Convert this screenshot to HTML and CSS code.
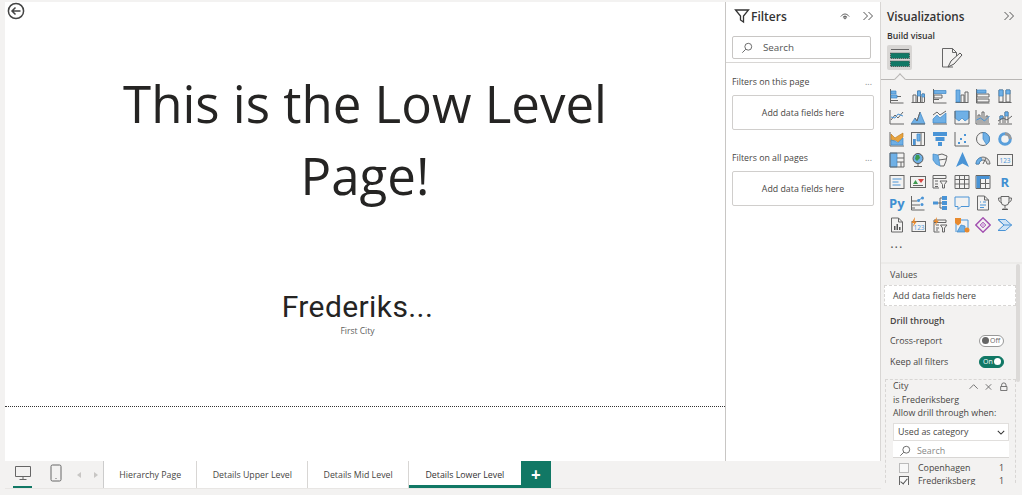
FILE: index.html
```html
<!DOCTYPE html>
<html lang="en">
<head>
    <meta charset="UTF-8">
    <title>Details Lower Level</title>
    <link rel="stylesheet" href="styles.css">
</head>
<body>
<div class="app">
    <div class="report">
        <div class="report-top">
            <div class="canvas">
                <svg class="back" viewBox="0 0 18 18"><circle cx="9" cy="9" r="7.6"/><path d="M13.5 9H5M8.500 5.500 5 9l3.500 3.500"/></svg>
                <div class="headline">This is the Low Level Page!</div>
                <div class="card">
                    <div class="card-value">Frederiks...</div>
                    <div class="card-label">First City</div>
                </div>
            </div>

            <div class="filters">
                <div class="pane-head">
                    <svg class="funnel" viewBox="0 0 16 16"><path d="M1.500 2h13L9.500 8v6l-3-2V8z"/></svg>
                    <span class="pane-title">Filters</span>
                    <svg class="eye" viewBox="0 0 12 10"><path d="M1 5c3-4 7-4 10 0M3.500 6c1.500-2 3.500-2 5 0"/><circle cx="6" cy="6.500" r="1.300"/></svg>
                    <svg class="chev" viewBox="0 0 12 10"><path d="M1.500 1l4 4-4 4M6.500 1l4 4-4 4"/></svg>
                </div>
                <div class="search">
                    <svg class="glass" viewBox="0 0 14 14"><circle cx="8.500" cy="5.500" r="4"/><path d="M5.500 8.500 1.500 12.500"/></svg>
                    <span>Search</span>
                </div>
                <div class="filter-group">
                    <div class="group-head"><span>Filters on this page</span><span class="more">...</span></div>
                    <div class="drop">Add data fields here</div>
                </div>
                <div class="filter-group">
                    <div class="group-head"><span>Filters on all pages</span><span class="more">...</span></div>
                    <div class="drop">Add data fields here</div>
                </div>
            </div>
        </div>

        <div class="tabbar">
            <div class="views">
                <span class="view view-on"><svg viewBox="0 0 18 18"><path d="M1.500 2.500h15v10h-15zM9 12.500v3M5.500 15.500h7"/></svg></span>
                <span class="view"><svg viewBox="0 0 18 18"><rect x="4" y="1" width="10" height="16" rx="1.500"/><path d="M8.500 14.500h1"/></svg></span>
                <span class="pager"><i class="left"></i><i class="right"></i></span>
            </div>
            <div class="tab">Hierarchy Page</div>
            <div class="tab">Details Upper Level</div>
            <div class="tab">Details Mid Level</div>
            <div class="tab tab-on">Details Lower Level</div>
            <div class="tab-add">+</div>
        </div>
    </div>

    <div class="viz">
        <div class="viz-top">
            <div class="pane-head">
                <span class="pane-title">Visualizations</span>
                <svg class="chev" viewBox="0 0 12 10"><path d="M1.500 1l4 4-4 4M6.500 1l4 4-4 4"/></svg>
            </div>
            <div class="build">Build visual</div>
            <div class="modes">
                <span class="mode mode-on">
                    <svg viewBox="0 0 22 22"><path class="g" d="M2 2.500h18"/><rect x="1.500" y="6" width="19" height="5.500" fill="#117865" stroke="#555" stroke-dasharray="1 1"/><rect x="1.500" y="14" width="19" height="5.500" fill="#117865" stroke="#555" stroke-dasharray="1 1"/></svg>
                </span>
                <span class="mode">
                    <svg viewBox="0 0 22 22"><path class="g" d="M12 20H1.500V1.500h10l4 4V9"/><path class="g" d="M11.500 1.500v4h4"/><path d="M7 20l3-6 9-8 2 2-8 9z" fill="#f3f2f1" stroke="#555"/></svg>
                </span>
            </div>
            <div class="mode-rule"><i></i></div>
            <div class="vgrid">
                <!-- row 1 -->
                <svg class="vi" viewBox="0 0 16 16"><path class="g" d="M1.500 1v14h13M2 4.500h5M2 8.500h10M2 12.500h7"/><path class="b" d="M2 3h5v3H2zM2 7h6v3H2z"/></svg>
                <svg class="vi" viewBox="0 0 16 16"><path class="g" d="M1.500 14.500h13M3 14V7h3v7M7.500 14V3h3v11M12 14V6h2.500v8"/><path class="b" d="M7.500 3h3v5h-3zM12 6h2.500v3H12z"/></svg>
                <svg class="vi" viewBox="0 0 16 16"><path class="g" d="M1.500 1v14h13M2 7h8v3H2zM2 11.500h5"/><path class="b" d="M2 2.500h12v3H2z"/></svg>
                <svg class="vi" viewBox="0 0 16 16"><path class="g" d="M1.500 14.500h13M7 14V7h3v7M11 14V4h3v10"/><path class="b" d="M2 2h4v12H2z"/></svg>
                <svg class="vi" viewBox="0 0 16 16"><path class="g" d="M1.500 1v14h13M2 6h12v3H2zM2 11h12v3H2z"/><path class="b" d="M2 2h9v3H2z"/></svg>
                <svg class="vi" viewBox="0 0 16 16"><path class="g" d="M1.500 14.500h13M2 2h4v12H2zM9 2h4v12H9z"/><path class="b" d="M2 2h4v6H2zM9 2h4v4H9z"/></svg>
                <!-- row 2 -->
                <svg class="vi" viewBox="0 0 16 16"><path class="g" d="M1 1v14h14"/><path class="g" d="M2 11l4-5 3 3 5-6"/><path class="l" d="M2 8l4 1 3-4 5 2"/></svg>
                <svg class="vi" viewBox="0 0 16 16"><path class="b" d="M1 15l4-6 2 3 3-9 5 12z"/><path class="g" d="M1 15h14M5 9l2 3 3-9"/></svg>
                <svg class="vi" viewBox="0 0 16 16"><path class="b" d="M1 10l4-4 3 3 6-5v10H1z"/><path class="g" d="M1 6l4-3 3 3 6-4M1 15h14"/></svg>
                <svg class="vi" viewBox="0 0 16 16"><path class="b" d="M1 2h14v7l-4 3-3-3-3 3-4-3z"/><path class="g" d="M1 15h14V2M1 2v13"/></svg>
                <svg class="vi" viewBox="0 0 16 16"><path class="g" d="M1 1v14h14M3 14V6h2v8M7 14V3h2v11M11 14V7h2v7"/><path class="l" d="M1.500 11l4-2 4 3 5-5"/></svg>
                <svg class="vi" viewBox="0 0 16 16"><path class="g" d="M1 15h14M3 14V7h3v7M8 14V3h3v11"/><path class="b" d="M3 7h3v3H3zM8 3h3v4H8z"/><path class="g" d="M1 12l5-3 4 2 5-4"/></svg>
                <!-- row 3 -->
                <svg class="vi" viewBox="0 0 16 16"><path class="g" d="M1 1v14h14"/><path d="M2 3l4 4 3-2 5-3v4l-5 5-3-2-4 2z" fill="#e8a33d" stroke="#b5761c" stroke-width=".6"/><path class="b" d="M2 9l4 1 3 2 5-5v7H2z"/></svg>
                <svg class="vi" viewBox="0 0 16 16"><path class="g" d="M1 1.500h14M1.500 2v12.500h13V2M5 14V8M11 14V2"/><path class="b" d="M7 3h3v7H7z"/><path class="f" d="M3 8h2.500v6H3z"/></svg>
                <svg class="vi" viewBox="0 0 16 16"><path class="f" d="M1 1h14v4H1zM3.500 6h9v4h-9zM6 11h4v4H6z"/></svg>
                <svg class="vi" viewBox="0 0 16 16"><path class="g" d="M1 1v14h14"/><path class="d" d="M4 11h2v2H4zM6 7h2v2H6zM10 10h2v2h-2zM10 3h2v2h-2z"/></svg>
                <svg class="vi" viewBox="0 0 16 16"><circle class="g2" cx="8" cy="8" r="6.500"/><path class="b" d="M8 1.500A6.500 6.500 0 0 1 14.500 8a6.500 6.500 0 0 1-3 5.500L8 8z"/></svg>
                <svg class="vi" viewBox="0 0 16 16"><circle cx="8" cy="8" r="5.300" fill="none" stroke="#5a9fdb" stroke-width="3"/><path d="M8 2.700A5.300 5.300 0 0 1 13.300 8" fill="none" stroke="#9a9a9a" stroke-width="3"/></svg>
                <!-- row 4 -->
                <svg class="vi" viewBox="0 0 16 16"><path class="b" d="M1 1h7v14H1z"/><path class="g" d="M1 1h14v14H1zM8 6h7M8 10h7M12 10v5"/></svg>
                <svg class="vi" viewBox="0 0 16 16"><circle cx="8" cy="6.500" r="5" fill="#6fb0e6" stroke="#555"/><path d="M6 3l3 0 1 3-3 3-2-2z" fill="#3c9a4e"/><path class="g" d="M4 14.500h8M8 11.500v3"/></svg>
                <svg class="vi" viewBox="0 0 16 16"><path class="b" d="M1 2l5 1 1 5 1 6-4-2-3-4z"/><path class="g" d="M6 3l4-1 5 2-1 5-2 5-4 0M7 8l7-1"/></svg>
                <svg class="vi" viewBox="0 0 16 16"><path d="M8.500 0 15 15l-6.500-3.500L2 15z" fill="#4a94d6"/></svg>
                <svg class="vi" viewBox="0 0 16 16"><path d="M1 12a7 7 0 0 1 14 0h-3a4 4 0 0 0-8 0z" fill="#d8d8d8" stroke="#555" stroke-width=".8"/><path class="b" d="M1 12a7 7 0 0 1 5-6.500L7 8.300A4 4 0 0 0 4 12z"/><path class="g" d="M8 12l3-6"/></svg>
                <svg class="vi" viewBox="0 0 16 16"><rect class="g2" x=".5" y="2.500" width="15" height="11"/><text class="vtext" x="8" y="10.500">123</text></svg>
                <!-- row 5 -->
                <svg class="vi" viewBox="0 0 16 16"><rect class="g2" x="1" y="1.500" width="14" height="13"/><path class="l" d="M3.500 5h9M3.500 8h6M3.500 11h8"/></svg>
                <svg class="vi" viewBox="0 0 16 16"><rect class="g2" x=".5" y="2.500" width="15" height="11"/><path d="M3 10l2.500-4L8 10z" fill="#3c9a4e"/><path d="M8 5h6l-3 4z" fill="#d64541"/><path class="g" d="M3 11.500h10"/></svg>
                <svg class="vi" viewBox="0 0 16 16"><path class="g" d="M1 1.500h13v3H1zM1 4.500V14h6M3 7h3M3 10h3M3 12.500h3M8 7h7l-2.500 3.500V14h-2v-3.500z"/></svg>
                <svg class="vi" viewBox="0 0 16 16"><path class="g" d="M1 1.500h14v13H1zM1 5.500h14M1 10h14M5.500 2v12M10.500 2v12"/></svg>
                <svg class="vi" viewBox="0 0 16 16"><path class="g" d="M1 1.500h14v13H1z"/><path d="M1.500 2h13v3h-13zM1.500 5h4v9h-4z" fill="#4a94d6"/><path class="g" d="M5.500 9.500h9M10.500 5v9M5.500 5v9"/></svg>
                <span class="vi lang">R</span>
                <!-- row 6 -->
                <span class="vi lang">Py</span>
                <svg class="vi" viewBox="0 0 16 16"><path class="g" d="M1.500 1v14h13M2 6h5M2 10h8M2 13h3"/><circle class="d" cx="8.500" cy="5.500" r="1.500"/><circle class="d" cx="12.500" cy="3" r="1.500"/><circle class="d" cx="12" cy="9.500" r="1.500"/><path class="l" d="M9 5l3-2"/></svg>
                <svg class="vi" viewBox="0 0 16 16"><path class="f" d="M1 6.500h5v3H1zM10 1h5v4h-5zM10 6h5v4h-5zM10 11h5v4h-5z"/><path class="g" d="M6 8h4M8 3v10M8 3h2M8 13h2"/></svg>
                <svg class="vi" viewBox="0 0 16 16"><path class="l" d="M1 2h14v9.500H7l-3 3v-3H1z"/></svg>
                <svg class="vi" viewBox="0 0 16 16"><path class="g" d="M2.500 15V1h7l4 4v10zM9.500 1v4h4"/><path class="l" d="M5 7h1M8 7h3M5 10h6M5 12.500h4"/></svg>
                <svg class="vi" viewBox="0 0 16 16"><path class="g" d="M4 1.500h8v5a4 4 0 0 1-8 0zM4 3H1.500c0 3 1 4 3 4.500M12 3h2.500c0 3-1 4-3 4.500M8 10.500V13M5 14.500h6"/><path d="M5.500 13.500h5v1.500h-5z" fill="#555"/></svg>
                <!-- row 7 -->
                <svg class="vi" viewBox="0 0 16 16"><path class="g" d="M2.500 15V1h7l4 4v10zM9.500 1v4h4"/><path d="M5 13V9h1.500v4zM7.500 13V7H9v6zM10 13v-3h1.500v3z" fill="#555"/></svg>
                <svg class="vi" viewBox="0 0 16 16"><rect class="g2" x="2" y="4.500" width="13.500" height="10"/><text class="vtext" x="9" y="12.500">123</text><path d="M5 0 1.500 6H4L2.500 10 7 4.500H4.500z" fill="#e88a2d"/></svg>
                <svg class="vi" viewBox="0 0 16 16"><path class="g" d="M2 3h12v2.500H2zM2 5.500V15h5.500M4 8h3M4 11h3M4 13h2M8.500 8H15l-2.500 3v4h-2v-4z"/><path d="M5 0 1.500 5H4L2.500 9 7 3.500H4.500z" fill="#e88a2d"/></svg>
                <svg class="vi" viewBox="0 0 16 16"><path class="l" d="M2 15V3h12v8"/><path d="M1 1h6v5L4 8.500 1 6z" fill="#e88a2d"/><path class="b" d="M3 15l4-7 4 1v6z"/><circle cx="13" cy="13" r="2.500" fill="#e88a2d"/></svg>
                <svg class="vi" viewBox="0 0 16 16"><path d="M8 .8 15.200 8 8 15.200.8 8z" fill="none" stroke="#a24fb0" stroke-width="1.400"/><path d="M8 5l3 3-3 3-3-3z" fill="#d8b4df" stroke="#a24fb0" stroke-width=".7"/></svg>
                <svg class="vi" viewBox="0 0 16 16"><path d="M1 2.500h7.500l6 5.500-6 5.500H1l6-5.500z" fill="#cfe4f6" stroke="#4a94d6"/><path d="M1 2.500 7 8h8" fill="none" stroke="#4a94d6"/></svg>
                <span class="vi vdots">...</span>
            </div>
        </div>
        <div class="viz-well">
            <div class="well-label">Values</div>
            <div class="well-drop">Add data fields here</div>
            <div class="well-head">Drill through</div>
            <div class="switch-row"><span>Cross-report</span><span class="switch"><i></i>Off</span></div>
            <div class="switch-row"><span>Keep all filters</span><span class="switch switch-on">On<i></i></span></div>
            <div class="field-card">
                <div class="card-head">
                    <span>City</span>
                    <svg viewBox="0 0 44 10"><path d="M1 7.500 5.500 3 10 7.500M19 2.500l6 6M25 2.500l-6 6M36.500 5V3.500a2.500 2.500 0 0 1 5 0V5M35.500 5h7v4.500h-7z"/></svg>
                </div>
                <div class="card-line card-first">is Frederiksberg</div>
                <div class="card-line card-second">Allow drill through when:</div>
                <div class="select"><span>Used as category</span><svg viewBox="0 0 10 6"><path d="M1 1l4 4 4-4"/></svg></div>
                <div class="list-search">
                    <svg class="glass" viewBox="0 0 14 14"><circle cx="8.500" cy="5.500" r="4"/><path d="M5.500 8.500 1.500 12.500"/></svg>
                    <span>Search</span>
                </div>
                <div class="option"><i class="check"></i><span>Copenhagen</span><b>1</b></div>
                <div class="option"><i class="check checked"></i><span>Frederiksberg</span><b>1</b></div>
            </div>
            <div class="scroll-thumb"></div>
        </div>
    </div>
</div>
</body>
</html>
```

FILE: styles.css
```css
* {
    box-sizing: border-box;
}
html, body {
    margin: 0;
    height: 100%;
    overflow: hidden;
}
body {
    font-family: "Open Sans", "Noto Sans", sans-serif;
    color: #333;
    background: #f3f2f1;
}
.app {
    display: flex;
    width: 1022px;
    height: 495px;
    padding-top: 2px;
}
.report {
    width: 876px;
    margin-left: 5px;
    flex: none;
    display: flex;
    flex-direction: column;
}
.report-top {
    display: flex;
    height: 459px;
}
.canvas {
    position: relative;
    width: 720px;
    flex: none;
    background: #fff;
    display: flex;
    flex-direction: column;
    align-items: center;
}
.canvas::after {
    content: "";
    position: absolute;
    left: 0;
    right: 0;
    top: 404px;
    border-top: 1px dotted #333;
}
.back {
    position: absolute;
    left: 2px;
    top: 0;
    width: 18px;
    height: 18px;
    fill: none;
    stroke: #444;
    stroke-width: 1.500;
}
.headline {
    width: 520px;
    margin-top: 65px;
    text-align: center;
    font-size: 51px;
    line-height: 72px;
    color: #252423;
}
.card {
    margin: 78px 15px 0 0;
    text-align: center;
}
.card-value {
    font-family: Roboto, sans-serif;
    font-size: 30px;
    line-height: 36px;
    letter-spacing: .4px;
    color: #252423;
}
.card-label {
    font-size: 8.500px;
    line-height: 12px;
    color: #605e5c;
}

/* page tabs */
.tabbar {
    display: flex;
    height: 28px;
    font-size: 8.800px;
    color: #484644;
    border-bottom: 1px solid #e8e6e4;
}
.views {
    width: 99px;
    display: flex;
    align-items: center;
    padding-left: 8px;
    border-right: 1px solid #ccc;
}
.view {
    width: 19px;
    height: 27px;
    margin-right: 16px;
    display: flex;
    align-items: center;
    justify-content: center;
    padding-bottom: 3px;
}
.view + .view {
    margin-left: -2px;
    margin-right: 14px;
}
.view svg {
    width: 18px;
    height: 18px;
    fill: none;
    stroke: #666;
}
.view-on {
    border-bottom: 2px solid #117865;
    height: 24px;
    margin-top: 2px;
}
.pager {
    display: flex;
    gap: 13px;
    margin-left: -2px;
}
.pager i {
    border: 3px solid transparent;
}
.pager .left {
    border-right: 4px solid #c8c6c4;
    border-left: 0;
}
.pager .right {
    border-left: 4px solid #c8c6c4;
    border-right: 0;
}
.tab {
    background: #fff;
    padding: 0 15.250px;
    display: flex;
    align-items: center;
    border-right: 1px solid #d8d6d4;
}
.tab-on {
    border-right: 0;
    border-bottom: 3px solid #117865;
    padding: 3px 16.500px 0;
    color: #333;
}
.tab-add {
    width: 30px;
    background: #117865;
    color: #fff;
    font-size: 17px;
    font-weight: 700;
    display: flex;
    align-items: center;
    justify-content: center;
}

/* filter pane */
.filters {
    width: 156px;
    flex: none;
    background: #fff;
    border-left: 1px solid #c8c6c4;
    border-right: 1px solid #d8d6d4;
}
.pane-head {
    display: flex;
    align-items: center;
    height: 28px;
}
.filters .pane-head {
    padding: 0 6px 0 8px;
}
.pane-title {
    font-size: 12px;
    font-weight: 600;
    color: #333;
    flex: 1;
}
.funnel {
    width: 16px;
    height: 16px;
    margin-right: 1px;
    fill: none;
    stroke: #333;
    stroke-width: 1.300;
}
.eye {
    width: 10px;
    height: 9px;
    margin-right: 12px;
    fill: none;
    stroke: #444;
}
.chev {
    width: 12px;
    height: 10px;
    fill: none;
    stroke: #555;
}
.search {
    display: flex;
    align-items: center;
    gap: 10px;
    height: 23px;
    margin: 6px 9px 3px 6px;
    padding-left: 8px;
    border: 1px solid #c8c6c4;
    border-radius: 2px;
    font-size: 9.800px;
    color: #555;
}
.glass {
    width: 12px;
    height: 12px;
    fill: none;
    stroke: #555;
}
.filter-group {
    padding: 12px 6px 6px;
    border-top: 1px solid #d8d6d4;
}
.filter-group + .filter-group {
    border-top: 0;
    padding-top: 15px;
}
.group-head {
    display: flex;
    justify-content: space-between;
    align-items: center;
    font-size: 8.800px;
    line-height: 14px;
    margin-bottom: 6px;
    color: #484644;
}
.more {
    color: #888;
    padding-right: 2px;
}
.drop {
    height: 35px;
    display: flex;
    align-items: center;
    justify-content: center;
    border: 1px solid #d0cecc;
    border-radius: 2px;
    font-size: 8.800px;
    color: #484644;
}

/* visualizations pane */
.viz {
    width: 141px;
    flex: none;
    height: 483px;
    overflow: hidden;
    display: flex;
    flex-direction: column;
}
.viz-top {
    height: 260px;
    flex: none;
}
.viz .pane-head {
    padding: 0 7px 0 6px;
}
.viz .pane-title {
    font-size: 11.700px;
}
.build {
    font-size: 8.700px;
    font-weight: 600;
    line-height: 12px;
    margin: 0 0 3px 6px;
    color: #333;
}
.modes {
    display: flex;
    gap: 27px;
    margin-left: 6px;
}
.mode {
    width: 25px;
    height: 25px;
    padding: 1.500px;
    border-radius: 2px;
}
.mode svg {
    width: 22px;
    height: 22px;
    display: block;
}
.mode-on {
    background: #d8d6d4;
}
.mode-rule {
    position: relative;
    height: 1px;
    margin-top: 9px;
    background: #b8b6b4;
}
.mode-rule i {
    position: absolute;
    left: 15px;
    top: -4px;
    width: 8px;
    height: 8px;
    transform: rotate(45deg);
    background: #f3f2f1;
    border-left: 1px solid #b8b6b4;
    border-top: 1px solid #b8b6b4;
}
.vgrid {
    display: grid;
    grid-template-columns: repeat(6, 21.600px);
    grid-auto-rows: 21.500px;
    margin: 5px 0 0 5px;
    align-items: center;
    justify-items: center;
}
.vi {
    width: 16px;
    height: 16px;
}
.g {
    fill: none;
    stroke: #666;
}
.g2 {
    fill: #f3f2f1;
    stroke: #666;
}
.b {
    fill: #6fb0e6;
    stroke: #3d86c6;
    stroke-width: .7;
}
.f {
    fill: #4a94d6;
}
.l {
    fill: none;
    stroke: #4a94d6;
}
.d {
    fill: #4a94d6;
}
.vtext {
    font-size: 6.500px;
    text-anchor: middle;
    fill: #4a94d6;
}
.lang {
    font-size: 13px;
    font-weight: 700;
    line-height: 16px;
    text-align: center;
    color: #3f8fd2;
    white-space: nowrap;
}
.vdots {
    font-size: 13px;
    line-height: 10px;
    letter-spacing: 1px;
    text-align: center;
    color: #555;
}
.viz-well {
    position: relative;
    flex: 1;
    min-height: 0;
    overflow: hidden;
    border-top: 2px solid #ecebe9;
    padding: 4px 0 0 3px;
    font-size: 8.900px;
    color: #484644;
}
.well-label {
    line-height: 14px;
    padding-left: 6px;
}
.well-drop {
    width: 132px;
    height: 21px;
    margin-top: 3px;
    padding-left: 8px;
    display: flex;
    align-items: center;
    background: #fff;
    border: 1px dashed #d8d6d4;
}
.well-head {
    margin-top: 8px;
    padding-left: 6px;
    line-height: 14px;
    font-weight: 600;
}
.switch-row {
    display: flex;
    justify-content: space-between;
    align-items: center;
    width: 114px;
    height: 21px;
    margin-left: 6px;
    margin-top: 2px;
}
.switch-row + .switch-row {
    margin-top: 0;
}
.switch {
    width: 25px;
    height: 12px;
    border: 1px solid #999;
    border-radius: 6px;
    background: #fff;
    display: flex;
    align-items: center;
    gap: 1px;
    padding: 0 2px;
    font-size: 7px;
    line-height: 10px;
    color: #666;
}
.switch i {
    width: 7px;
    height: 7px;
    border-radius: 50%;
    background: #666;
    flex: none;
}
.switch-on {
    background: #117865;
    border-color: #117865;
    color: #fff;
    justify-content: space-between;
    padding-left: 3px;
}
.switch-on i {
    background: #fff;
}
.field-card {
    width: 131px;
    margin: 7px 0 0 1px;
    padding: 0 6px 0 7px;
    border: 1px dashed #d8d6d4;
    line-height: 12px;
}
.card-head {
    display: flex;
    justify-content: space-between;
    align-items: center;
    height: 12px;
}
.card-head svg {
    width: 41px;
    height: 9px;
    fill: none;
    stroke: #666;
}
.card-first {
    margin-top: 2px;
}
.card-second {
    margin-top: 1px;
}
.select {
    display: flex;
    justify-content: space-between;
    align-items: center;
    height: 18px;
    margin-top: 4px;
    padding: 0 3px 0 4px;
    background: #fff;
    border: 1px solid #e1dfdd;
}
.select svg {
    width: 8px;
    height: 5px;
    fill: none;
    stroke: #333;
    stroke-width: 1.300;
}
.list-search {
    display: flex;
    align-items: center;
    gap: 6px;
    height: 17px;
    padding: 3px 0 0 6px;
    background: #fff;
    border-bottom: 1px solid #d8d6d4;
    color: #888;
}
.option {
    display: flex;
    align-items: center;
    height: 13px;
    padding-left: 6px;
}
.list-search + .option {
    margin-top: 3px;
}
.option span {
    flex: 1;
    margin-left: 9px;
}
.option b {
    font-weight: 400;
    padding-right: 5px;
}
.check {
    width: 10px;
    height: 10px;
    border: 1px solid #bbb;
    background: #f8f8f8;
}
.checked {
    border-color: #666;
    position: relative;
}
.checked::after {
    content: "";
    position: absolute;
    left: 2px;
    top: 0;
    width: 3px;
    height: 6px;
    border: solid #555;
    border-width: 0 1px 1px 0;
    transform: rotate(40deg);
}
.scroll-thumb {
    position: absolute;
    right: 2px;
    top: 0;
    width: 4px;
    height: 118px;
    border-radius: 2px;
    background: #dcdad8;
}
```
